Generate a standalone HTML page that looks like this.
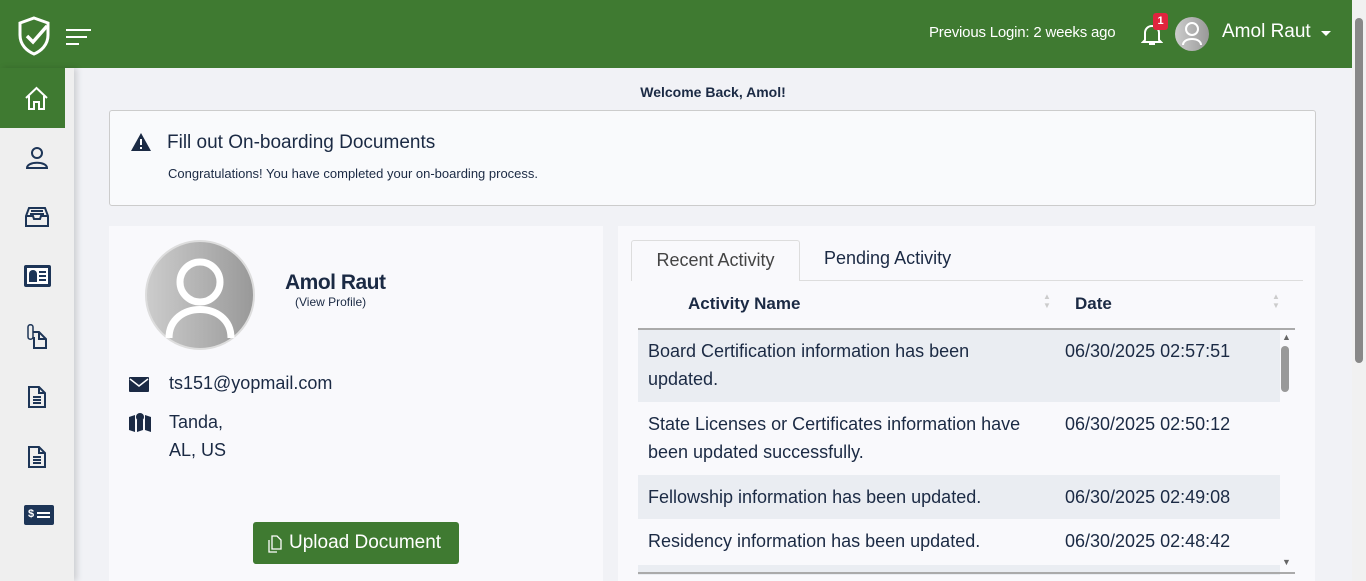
<!DOCTYPE html>
<html><head><style>
*{box-sizing:border-box;margin:0;padding:0}
body{width:1366px;height:581px;overflow:hidden;background:#f1f2f6;font-family:"Liberation Sans",sans-serif;color:#1b2a44;position:relative}
.hdr{position:absolute;left:0;top:0;width:1352px;height:68px;background:#3f7a31;color:#fff}
.side{position:absolute;left:0;top:68px;width:74px;height:513px;background:#efefef;box-shadow:3px 0 6px rgba(0,0,0,.15)}
.ico{position:absolute;left:22px}
.sb{position:absolute;right:0;top:0;width:14px;height:581px;background:#f1f1f1}
.card{position:absolute;background:#f9f9fc}
.srt{position:absolute;font-size:8px;color:#ccc;line-height:9px}
</style></head><body>
<div class="hdr">
<svg style="position:absolute;left:17px;top:16px" width="34" height="40" viewBox="0 0 34 40"><path d="M17 2 L31 7 V19 C31 29 24 35 17 38 C10 35 3 29 3 19 V7 Z" fill="none" stroke="#fff" stroke-width="3"/><path d="M10 20 L16 26 L30 10" fill="none" stroke="#fff" stroke-width="3.5"/></svg>
<div style="position:absolute;left:66px;top:29px;width:25px;height:2px;background:#fff"></div>
<div style="position:absolute;left:66px;top:36px;width:21px;height:2px;background:#fff"></div>
<div style="position:absolute;left:66px;top:43px;width:13px;height:2px;background:#fff"></div>
<div style="position:absolute;left:929px;top:24px;font-size:15px;letter-spacing:-.2px">Previous Login: 2 weeks ago</div>
<svg style="position:absolute;left:1141px;top:22px" width="22" height="26" viewBox="0 0 22 26"><path d="M4 18 V11 C4 7 7 4 11 4 C15 4 18 7 18 11 V18 L20 20 H2 Z" fill="none" stroke="#fff" stroke-width="2"/><path d="M8 22 H14" stroke="#fff" stroke-width="2"/></svg>
<div style="position:absolute;left:1153px;top:13px;width:15px;height:17px;background:#e0243e;border-radius:3px;font-size:11px;font-weight:bold;text-align:center;line-height:17px">1</div>
<div style="position:absolute;left:1175px;top:17px;width:34px;height:34px;border-radius:50%;background:linear-gradient(90deg,#ccc,#999)"><svg width="34" height="34" viewBox="0 0 34 34"><circle cx="17" cy="12" r="6" fill="none" stroke="#fff" stroke-width="2"/><path d="M8 28 C8 20 26 20 26 28" fill="none" stroke="#fff" stroke-width="2"/></svg></div>
<div style="position:absolute;left:1222px;top:21px;font-size:19px">Amol Raut</div>
<div style="position:absolute;left:1321px;top:31px;border:5px solid transparent;border-top-color:#fff;border-bottom:0"></div>
</div>
<div class="side">
<div style="position:absolute;left:0;top:0;width:65px;height:60px;background:#3f7a31"></div>
<svg class="ico" style="top:18px;left:24px" width="25" height="25" viewBox="0 0 25 25" fill="none" stroke="#fff" stroke-width="2"><path d="M2 12 L12.5 2 L23 12 M5 10 V23 H10 V16 H15 V23 H20 V10"/></svg>
<svg class="ico" style="top:78px;left:26px" width="22" height="24" viewBox="0 0 22 24" fill="none" stroke="#1d3557" stroke-width="2"><circle cx="11" cy="7" r="5"/><path d="M1 22 C1 15 21 15 21 22 Z"/></svg>
<svg class="ico" style="top:138px;left:25px" width="24" height="22" viewBox="0 0 24 22" fill="none" stroke="#1d3557" stroke-width="2"><path d="M4 2 H20 L23 10 V20 H1 V10 Z M1 10 H8 L9 13 H15 L16 10 H23 M6 5 H18 M5 8 H19"/></svg>
<div class="ico" style="top:197px;left:24px;width:27px;height:22px;background:#1d3557;border-radius:2px"><div style="position:absolute;left:3px;top:3px;width:21px;height:16px;background:#fff"></div><div style="position:absolute;left:5px;top:5px;width:8px;height:12px;background:#1d3557;border-radius:4px 4px 0 0"></div><div style="position:absolute;left:15px;top:6px;width:7px;height:2px;background:#1d3557"></div><div style="position:absolute;left:15px;top:10px;width:7px;height:2px;background:#1d3557"></div><div style="position:absolute;left:15px;top:14px;width:7px;height:2px;background:#1d3557"></div></div>
<svg class="ico" style="top:255px;left:26px" width="22" height="26" viewBox="0 0 22 26" fill="none" stroke="#1d3557" stroke-width="2"><path d="M7 9 H13 L20 16 V25 H8 V14 M13 9 V16 H20"/><path d="M2 4 V14 C2 17 7 17 7 14 V4 C7 1 2 1 2 4" stroke-width="1.5"/></svg>
<svg class="ico" style="top:318px;left:28px" width="18" height="22" viewBox="0 0 18 22" fill="none" stroke="#1d3557" stroke-width="2"><path d="M1 1 H11 L17 7 V21 H1 Z M11 1 V7 H17 M5 11 H13 M5 14 H13 M5 17 H13"/></svg>
<svg class="ico" style="top:378px;left:28px" width="18" height="22" viewBox="0 0 18 22" fill="none" stroke="#1d3557" stroke-width="2"><path d="M1 1 H11 L17 7 V21 H1 Z M11 1 V7 H17 M5 11 H13 M5 14 H13 M5 17 H13"/></svg>
<div class="ico" style="top:437px;left:24px;width:30px;height:20px;background:#1d3557;border-radius:2px"><span style="position:absolute;left:4px;top:3px;color:#fff;font-size:11px;font-weight:bold">$</span><div style="position:absolute;left:13px;top:7px;width:13px;height:2px;background:#fff"></div><div style="position:absolute;left:13px;top:11px;width:13px;height:2px;background:#fff"></div></div>
</div>
<div style="position:absolute;left:0;width:1352px;top:84px;text-align:center;font-size:14px;font-weight:bold;padding-left:74px">Welcome Back, Amol!</div>
<div style="position:absolute;left:109px;top:110px;width:1207px;height:96px;border:1px solid #ccc;border-radius:3px;background:#f9fafc">
<svg style="position:absolute;left:20px;top:21px" width="22" height="20" viewBox="0 0 22 20"><path d="M11 1 L21 19 H1 Z" fill="#1b2a44"/><path d="M11 7 V13 M11 15 V17" stroke="#fff" stroke-width="2"/></svg>
<div style="position:absolute;left:57px;top:21px;font-size:19px">Fill out On-boarding Documents</div>
<div style="position:absolute;left:58px;top:55px;font-size:13px">Congratulations! You have completed your on-boarding process.</div>
</div>
<div class="card" style="left:109px;top:226px;width:494px;height:355px">
<div style="position:absolute;left:36px;top:14px;width:110px;height:110px;border-radius:50%;background:linear-gradient(90deg,#ccc,#999);border:2px solid #ddd"><svg width="106" height="106" viewBox="0 0 106 106" fill="none" stroke="#fff" stroke-width="7"><circle cx="53" cy="40" r="20"/><path d="M22 96 C22 58 84 58 84 96"/></svg></div>
<div style="position:absolute;left:176px;top:45px;font-size:21px;font-weight:bold;letter-spacing:-.5px">Amol Raut</div>
<div style="position:absolute;left:186px;top:69px;font-size:12px">(View Profile)</div>
<svg style="position:absolute;left:20px;top:151px" width="20" height="15" viewBox="0 0 20 15"><rect width="20" height="15" rx="1" fill="#1b2a44"/><path d="M1 2 L10 9 L19 2" fill="none" stroke="#fff" stroke-width="1.5"/></svg>
<div style="position:absolute;left:60px;top:147px;font-size:18px">ts151@yopmail.com</div>
<svg style="position:absolute;left:20px;top:186px" width="22" height="20" viewBox="0 0 22 20"><path d="M0 5 L6 3 V20 L0 18 Z M16 3 L22 5 V20 L16 18 Z M8 8 L14 8 V18 L8 20Z" fill="#1b2a44"/><circle cx="11" cy="5" r="4" fill="#1b2a44"/></svg>
<div style="position:absolute;left:60px;top:182px;font-size:18px;line-height:28px">Tanda,<br>AL, US</div>
<div style="position:absolute;left:144px;top:296px;width:206px;height:42px;background:#3f7a31;border-radius:3px;color:#fff;font-size:19px;line-height:42px;padding-left:36px">Upload Document
<svg style="position:absolute;left:14px;top:13px" width="16" height="18" viewBox="0 0 16 18" fill="none" stroke="#fff" stroke-width="1.3"><path d="M5 1 H10 L14 5 V14 H5 Z M2 5 V17 H10"/></svg></div>
</div>
<div class="card" style="left:618px;top:226px;width:697px;height:355px">
<div style="position:absolute;left:13px;top:54px;width:672px;border-top:1px solid #ddd"></div>
<div style="position:absolute;left:13px;top:14px;width:169px;height:41px;border:1px solid #ddd;border-bottom:none;border-radius:3px 3px 0 0;background:#f9f9fc;font-size:18px;color:#444;text-align:center;line-height:38px">Recent Activity</div>
<div style="position:absolute;left:206px;top:22px;font-size:18px">Pending Activity</div>
<div style="position:absolute;left:70px;top:68px;font-size:17px;font-weight:bold">Activity Name</div>
<div style="position:absolute;left:457px;top:68px;font-size:17px;font-weight:bold">Date</div>
<div class="srt" style="left:425px;top:66px">▲<br>▼</div>
<div class="srt" style="left:654px;top:66px">▲<br>▼</div>
<div style="position:absolute;left:20px;top:102px;width:657px;border-top:2px solid #aaa"></div>
<div style="position:absolute;left:20px;top:104px;width:642px;height:72px;background:#eaedf2"></div>
<div style="position:absolute;left:20px;top:249px;width:642px;height:44px;background:#eaedf2"></div>
<div style="position:absolute;left:20px;top:339px;width:642px;height:10px;background:#eaedf2"></div>
<div style="position:absolute;left:20px;top:346px;width:657px;border-top:2px solid #aaa"></div>
<div style="position:absolute;left:664px;top:106px;font-size:9px;color:#666">▲</div>
<div style="position:absolute;left:664px;top:331px;font-size:9px;color:#666">▼</div>
<div style="position:absolute;left:663px;top:120px;width:8px;height:46px;border-radius:4px;background:#999"></div>
<div style="position:absolute;left:30px;top:111px;font-size:18px;line-height:28px;color:#1b2a44">Board Certification information has been<br>updated.</div>
<div style="position:absolute;left:30px;top:184px;font-size:18px;line-height:28px">State Licenses or Certificates information have<br>been updated successfully.</div>
<div style="position:absolute;left:30px;top:257px;font-size:18px;line-height:28px">Fellowship information has been updated.</div>
<div style="position:absolute;left:30px;top:301px;font-size:18px;line-height:28px">Residency information has been updated.</div>
<div style="position:absolute;left:447px;top:111px;font-size:18px;line-height:28px">06/30/2025 02:57:51</div>
<div style="position:absolute;left:447px;top:184px;font-size:18px;line-height:28px">06/30/2025 02:50:12</div>
<div style="position:absolute;left:447px;top:257px;font-size:18px;line-height:28px">06/30/2025 02:49:08</div>
<div style="position:absolute;left:447px;top:301px;font-size:18px;line-height:28px">06/30/2025 02:48:42</div>
</div>
<div class="sb"><div style="position:absolute;left:3px;top:18px;width:8px;height:345px;border-radius:4px;background:#888"></div></div>
</body></html>
